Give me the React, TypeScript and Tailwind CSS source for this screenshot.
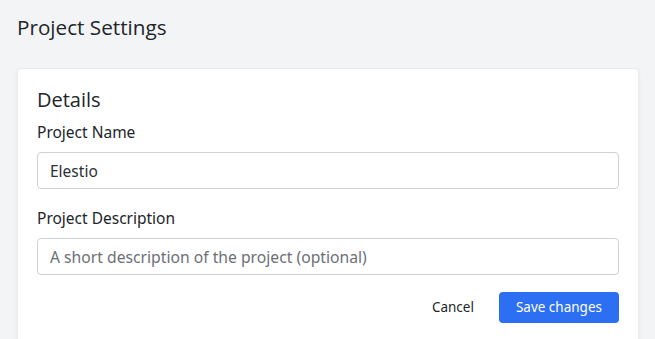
import React from "react";

export default function App() {
  return (
    <div className="w-[655px] h-[339px] overflow-hidden bg-[#f3f4f6] font-['Noto_Sans',sans-serif] text-[#212529]">
      <div className="px-[17px] pt-[13px]">
        <h1 className="text-[20.7px] leading-[28px] font-['Open_Sans',sans-serif] text-[#212529]">Project Settings</h1>
        <div className="mt-[27px] w-[622px] bg-white rounded-[4px] border border-[#e9ebee] shadow-[0_1px_3px_rgba(0,0,0,0.06)] px-[19px] pt-[18px] pb-[20px]">
          <h2 className="text-[20px] leading-[26px] font-['Open_Sans',sans-serif] text-[#212529]">Details</h2>
          <label className="block mt-[8px] text-[15.5px] leading-[22px] text-[#212529]">Project Name</label>
          <input
            className="mt-[9px] block w-full h-[37px] rounded-[4px] border border-[#cfd2d6] px-[12px] text-[15.5px] text-[#2d3035] outline-none"
            defaultValue="Elestio"
          />
          <label className="block mt-[18px] text-[15.5px] leading-[22px] text-[#212529]">Project Description</label>
          <input
            className="mt-[9px] block w-full h-[37px] rounded-[4px] border border-[#cfd2d6] px-[12px] text-[15.7px] placeholder:text-[#6c7075] outline-none"
            placeholder="A short description of the project (optional)"
          />
          <div className="mt-[17px] flex justify-end items-center gap-[25px]">
            <button className="text-[13.5px] text-[#212529]">Cancel</button>
            <button className="h-[31px] px-[17px] rounded-[4px] bg-[#2d6ff2] text-white text-[13.5px]">Save changes</button>
          </div>
        </div>
      </div>
    </div>
  );
}
